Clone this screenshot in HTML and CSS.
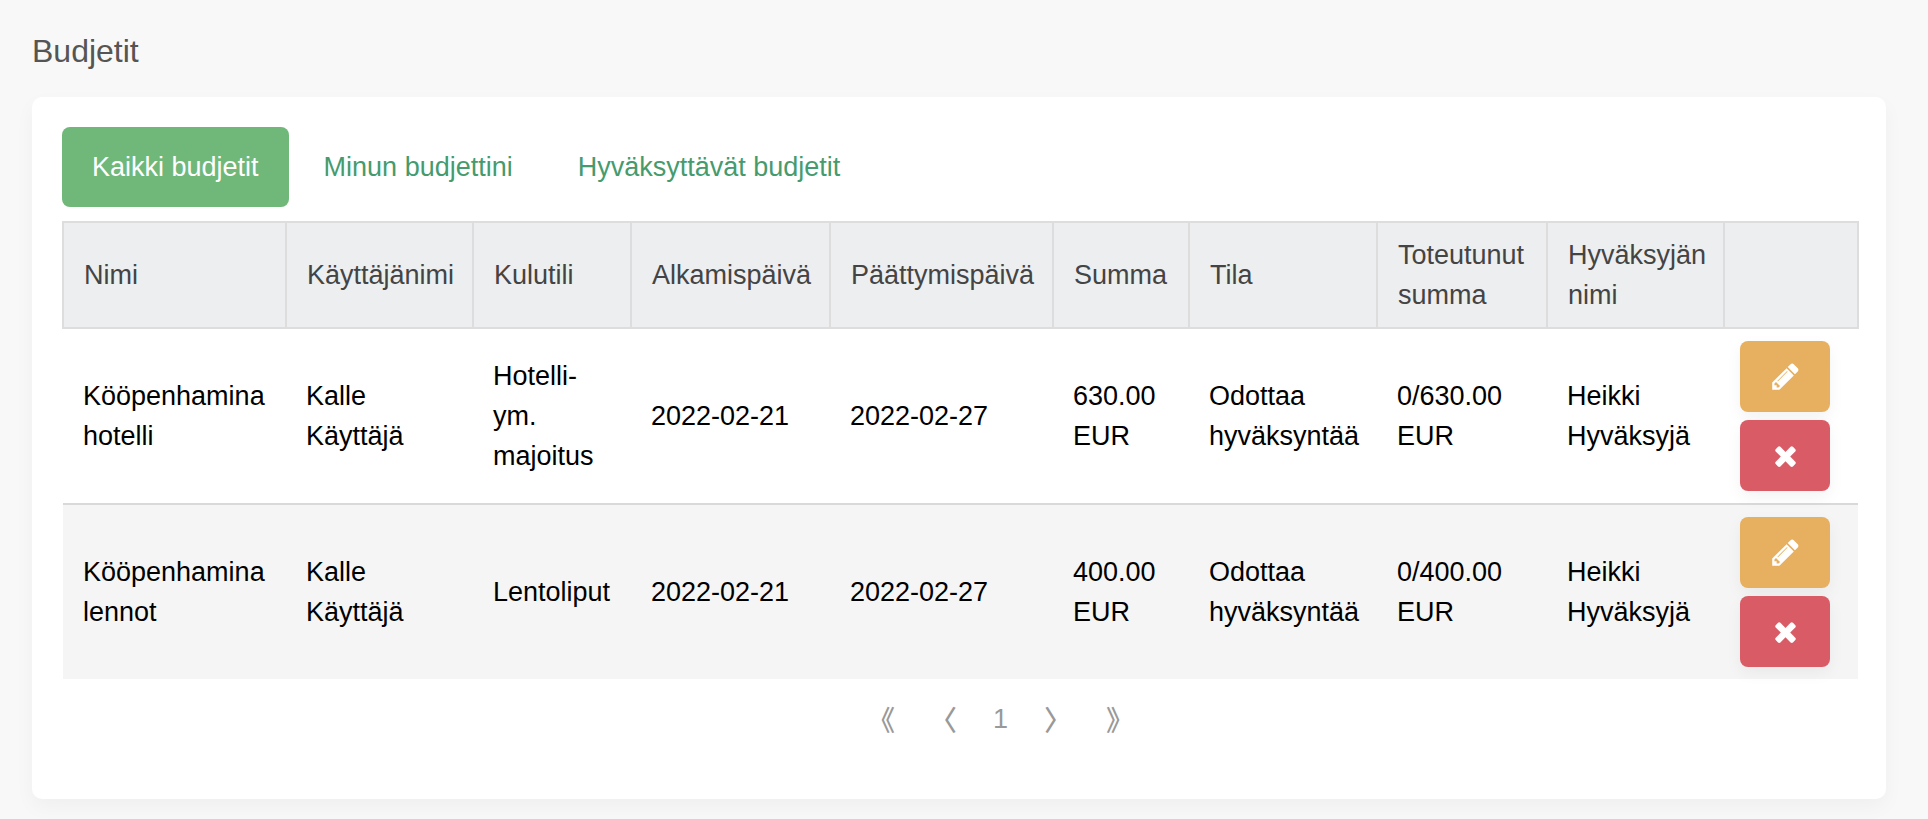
FILE: index.html
```html
<!DOCTYPE html>
<html lang="fi">
<head>
<meta charset="utf-8">
<meta name="viewport" content="width=device-width, initial-scale=1">
<title>Budjetit</title>
<link rel="stylesheet" href="styles.css">
</head>
<body class="page">
<svg class="sprite" aria-hidden="true">
  <symbol id="icon-pencil" viewBox="0 0 1792 1792">
    <path d="M491 1536l91-91-235-235-91 91v107h128v128h107zm523-928q0-22-22-22-10 0-17 7l-542 542q-7 7-7 17 0 22 22 22 10 0 17-7l542-542q7-7 7-17zm-54-192l416 416-832 832h-416v-416zm683 96q0 53-37 90l-166 166-416-416 166-165q36-38 90-38 53 0 91 38l235 234q37 39 37 91z"/>
  </symbol>
  <symbol id="icon-times" viewBox="0 0 1792 1792">
    <path d="M1490 1322q0 40-28 68l-136 136q-28 28-68 28t-68-28l-294-294-294 294q-28 28-68 28t-68-28l-136-136q-28-28-28-68t28-68l294-294-294-294q-28-28-28-68t28-68l136-136q28-28 68-28t68 28l294 294 294-294q28-28 68-28t68 28l136 136q28 28 28 68t-28 68l-294 294 294 294q28 28 28 68z"/>
  </symbol>
</svg>
<main>
  <h1 class="title">Budjetit</h1>
  <section class="card">
    <nav class="tabs">
      <a class="tab tab-active" href="#kaikki" aria-current="page">Kaikki budjetit</a>
      <a class="tab" href="#minun">Minun budjettini</a>
      <a class="tab" href="#hyvaksyttavat">Hyväksyttävät budjetit</a>
    </nav>
    <table class="budgets">
      <colgroup>
        <col class="col-name"><col class="col-user"><col class="col-account"><col class="col-start"><col class="col-end">
        <col class="col-sum"><col class="col-state"><col class="col-actual"><col class="col-approver"><col class="col-actions">
      </colgroup>
      <thead>
        <tr>
          <th scope="col">Nimi</th>
          <th scope="col">Käyttäjänimi</th>
          <th scope="col">Kulutili</th>
          <th scope="col">Alkamispäivä</th>
          <th scope="col">Päättymispäivä</th>
          <th scope="col">Summa</th>
          <th scope="col">Tila</th>
          <th scope="col">Toteutunut summa</th>
          <th scope="col">Hyväksyjän nimi</th>
          <td></td>
        </tr>
      </thead>
      <tbody>
        <tr>
          <td>Kööpenhamina hotelli</td>
          <td>Kalle Käyttäjä</td>
          <td>Hotelli- ym. majoitus</td>
          <td class="date">2022-02-21</td>
          <td class="date">2022-02-27</td>
          <td>630.00 EUR</td>
          <td>Odottaa hyväksyntää</td>
          <td>0/630.00 EUR</td>
          <td>Heikki Hyväksyjä</td>
          <td class="actions">
            <div class="action-list">
              <button class="btn btn-edit" type="button" aria-label="Muokkaa"><svg class="icon" aria-hidden="true"><use href="#icon-pencil"/></svg></button>
              <button class="btn btn-delete" type="button" aria-label="Poista"><svg class="icon" aria-hidden="true"><use href="#icon-times"/></svg></button>
            </div>
          </td>
        </tr>
        <tr>
          <td>Kööpenhamina lennot</td>
          <td>Kalle Käyttäjä</td>
          <td>Lentoliput</td>
          <td class="date">2022-02-21</td>
          <td class="date">2022-02-27</td>
          <td>400.00 EUR</td>
          <td>Odottaa hyväksyntää</td>
          <td>0/400.00 EUR</td>
          <td>Heikki Hyväksyjä</td>
          <td class="actions">
            <div class="action-list">
              <button class="btn btn-edit" type="button" aria-label="Muokkaa"><svg class="icon" aria-hidden="true"><use href="#icon-pencil"/></svg></button>
              <button class="btn btn-delete" type="button" aria-label="Poista"><svg class="icon" aria-hidden="true"><use href="#icon-times"/></svg></button>
            </div>
          </td>
        </tr>
      </tbody>
    </table>
    <ul class="pager">
      <li class="pager-item"><button class="pager-btn" type="button" aria-label="Ensimmäinen sivu">《</button></li>
      <li class="pager-item"><button class="pager-btn" type="button" aria-label="Edellinen sivu">〈</button></li>
      <li class="pager-item pager-current">1</li>
      <li class="pager-item"><button class="pager-btn" type="button" aria-label="Seuraava sivu">〉</button></li>
      <li class="pager-item"><button class="pager-btn" type="button" aria-label="Viimeinen sivu">》</button></li>
    </ul>
  </section>
</main>
</body>
</html>
```

FILE: styles.css
```css
* {
  box-sizing: border-box;
}

.page {
  margin: 0;
  padding: 31px 42px 20px 32px;
  background: #f8f8f8;
  color: #000;
  font-family: "Liberation Sans", Arial, sans-serif;
  font-size: 27px;
  line-height: 40px;
}

.sprite {
  display: none;
}

.title {
  margin: 0 0 26px;
  color: #555;
  font-size: 32px;
  font-weight: 400;
}

.card {
  padding: 30px 27px 60px 30px;
  border-radius: 10px;
  background: #fff;
  box-shadow: 0 8px 20px rgba(0, 0, 0, 0.04);
}

.tabs {
  display: flex;
  gap: 5px;
  margin-bottom: 14px;
}

.tab {
  padding: 20px 30px;
  border-radius: 8px;
  color: #469b6e;
  text-decoration: none;
}

.tab-active {
  background: #70b77a;
  color: #fff;
}

.budgets {
  width: 100%;
  border-collapse: collapse;
}

.col-name { width: 223px; }
.col-user { width: 187px; }
.col-account { width: 158px; }
.col-start { width: 199px; }
.col-end { width: 223px; }
.col-sum { width: 136px; }
.col-state { width: 188px; }
.col-actual { width: 170px; }
.col-approver { width: 177px; }
.col-actions { width: 134px; }

.budgets th,
.budgets td {
  padding: 12px 16px 12px 20px;
  font-weight: 400;
  text-align: left;
  vertical-align: middle;
}

.budgets thead th,
.budgets thead td {
  border: 2px solid #ddd;
  background: #edeef0;
  color: #444;
}

.budgets tbody tr + tr {
  border-top: 2px solid #d8dad9;
  background: #f5f5f5;
}

.budgets .date {
  white-space: nowrap;
}

.budgets .actions {
  padding: 12px 16px;
}

.action-list {
  display: flex;
  flex-direction: column;
  align-items: flex-start;
  gap: 8px;
}

.btn {
  display: flex;
  align-items: center;
  justify-content: center;
  width: 90px;
  height: 71px;
  padding: 0;
  border: 0;
  border-radius: 8px;
  color: #fff;
  box-shadow: 0 6px 16px rgba(0, 0, 0, 0.05);
}

.btn-edit {
  background: #e6b060;
}

.btn-delete {
  background: #d95b66;
}

.icon {
  width: 31px;
  height: 31px;
  fill: currentColor;
}

.pager {
  display: flex;
  justify-content: center;
  gap: 34px;
  margin: 20px 0 0;
  padding: 0 0 0 80px;
  color: #999;
  list-style: none;
}

.pager-item {
  display: flex;
}

.pager-current {
  padding: 0 2px;
}

.pager-btn {
  padding: 0;
  border: 0;
  background: none;
  color: inherit;
  font-family: "Noto Sans CJK JP", sans-serif;
  font-size: 28px;
  font-weight: 500;
  line-height: 40px;
}
```
